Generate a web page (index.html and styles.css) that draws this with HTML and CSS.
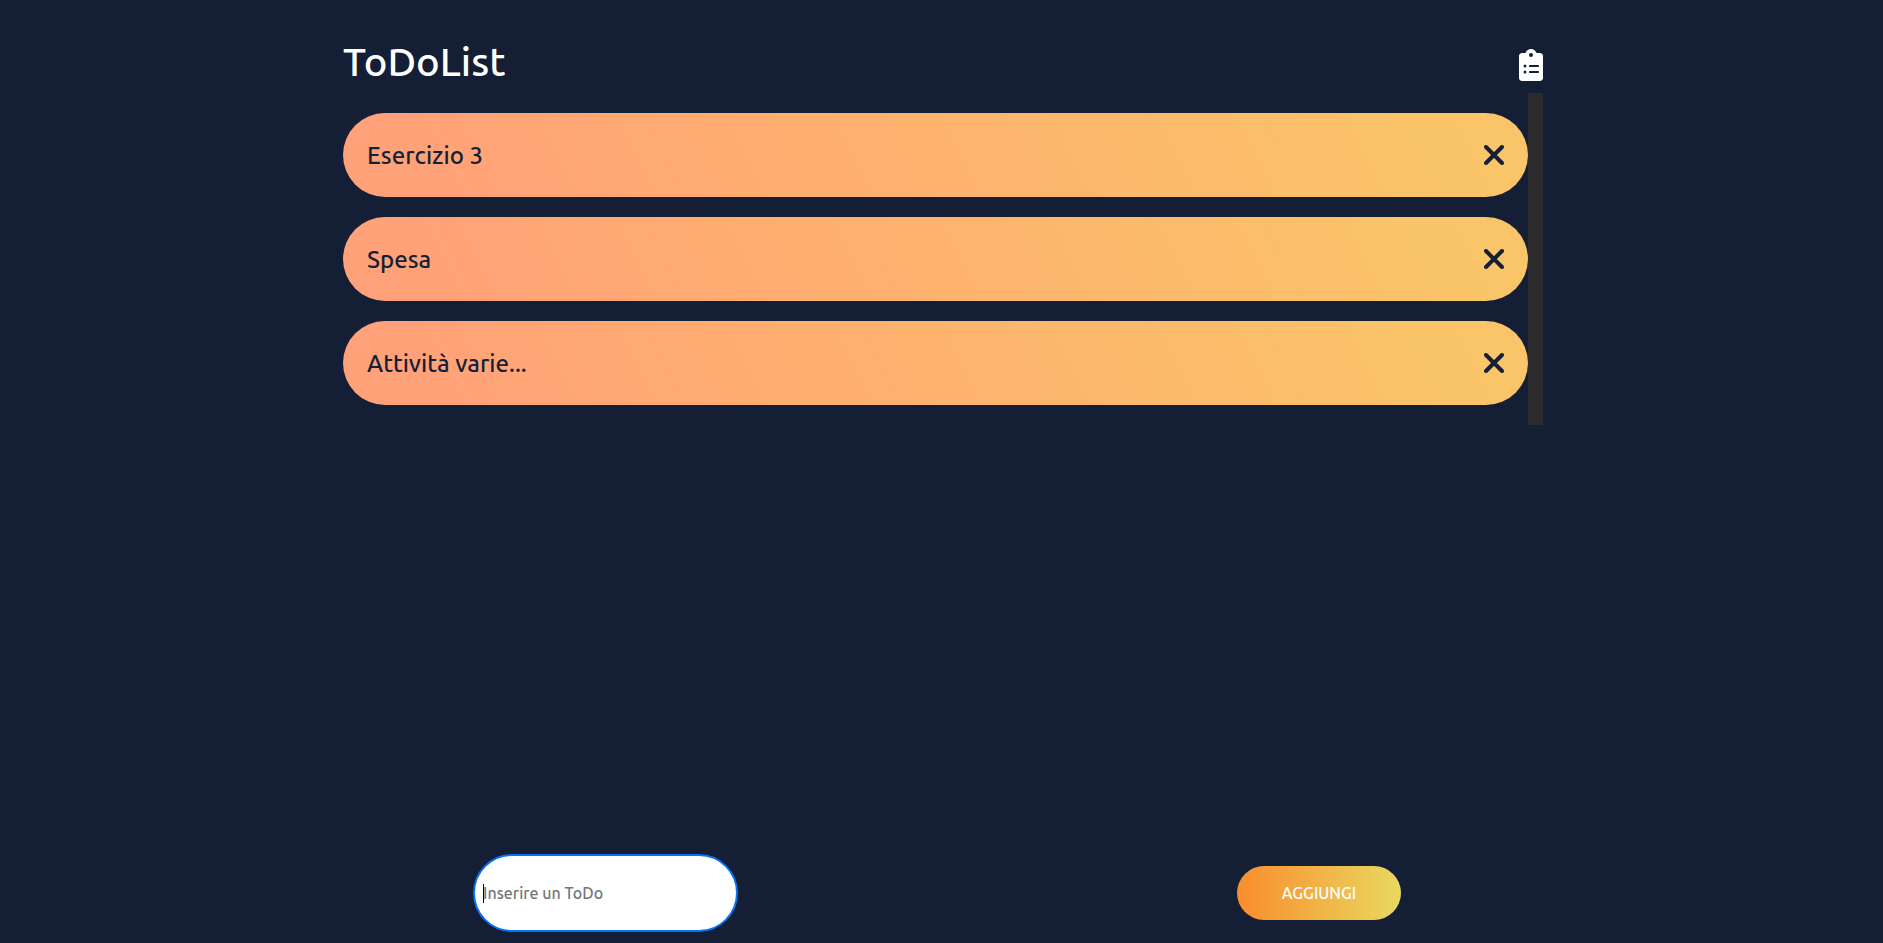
FILE: index.html
```html
<!DOCTYPE html>
<html lang="it">
<head>
<meta charset="utf-8">
<meta name="viewport" content="width=device-width, initial-scale=1">
<title>ToDoList</title>
<link rel="stylesheet" href="styles.css">
</head>
<body>
<div class="page">
  <header class="header">
    <h1 class="title">ToDoList</h1>
    <svg class="logo" viewBox="0 0 384 512" aria-hidden="true"><path fill="currentColor" fill-rule="evenodd" d="M336 64h-53.88C268.9 26.8 233.7 0 192 0S115.1 26.8 101.900 64H48C21.5 64 0 85.480 0 112v352C0 490.500 21.500 512 48 512h288c26.500 0 48-21.480 48-48V112C384 85.480 362.500 64 336 64zM192 64a32 32 0 1 1 0 64 32 32 0 1 1 0-64zM72 272a24 24 0 1 1 48 0 24 24 0 1 1-48 0zM176 256H304c8.800 0 16 7.200 16 16s-7.200 16-16 16H176c-8.800 0-16-7.200-16-16s7.200-16 16-16zM72 368a24 24 0 1 1 48 0 24 24 0 1 1-48 0zM160 368c0-8.800 7.200-16 16-16H304c8.800 0 16 7.200 16 16s-7.200 16-16 16H176c-8.800 0-16-7.200-16-16z"/></svg>
  </header>
  <main class="board">
    <ul class="list">
      <li class="item"><span class="label">Esercizio 3</span><button class="remove" type="button" aria-label="Rimuovi Esercizio 3"><svg class="cross" viewBox="0 0 20 20"><path d="M2 2 18 18M18 2 2 18"/></svg></button></li>
      <li class="item"><span class="label">Spesa</span><button class="remove" type="button" aria-label="Rimuovi Spesa"><svg class="cross" viewBox="0 0 20 20"><path d="M2 2 18 18M18 2 2 18"/></svg></button></li>
      <li class="item"><span class="label">Attività varie...</span><button class="remove" type="button" aria-label="Rimuovi Attività varie..."><svg class="cross" viewBox="0 0 20 20"><path d="M2 2 18 18M18 2 2 18"/></svg></button></li>
    </ul>
    <div class="track"></div>
  </main>
  <form class="form">
    <div class="entry">
      <input class="field" type="text" placeholder="Inserire un ToDo" aria-label="Inserire un ToDo" autofocus>
      <span class="caret"></span>
    </div>
    <button class="add" type="button">AGGIUNGI</button>
  </form>
</div>
</body>
</html>
```

FILE: styles.css
```css
* {
  box-sizing: border-box;
}

body {
  margin: 0;
  background: #141e34;
  color: #fff;
  font-family: Ubuntu, "Noto Sans", sans-serif;
  font-weight: 500;
}

.page {
  display: flex;
  flex-direction: column;
  width: 100%;
  max-width: 1203px;
  min-height: 100vh;
  margin: 0 auto;
  padding: 33px 0 11px 3px;
}

.header {
  display: flex;
  align-items: flex-start;
  justify-content: space-between;
  height: 60px;
}

.title {
  margin: 0;
  font-size: 40px;
  font-weight: 500;
  line-height: 58px;
}

.logo {
  width: 24px;
  height: 32px;
  margin-top: 16px;
}

.board {
  display: flex;
}

.list {
  display: flex;
  flex: 1;
  flex-direction: column;
  gap: 20px;
  margin: 0;
  padding: 20px 0;
  list-style: none;
}

.item {
  display: flex;
  align-items: center;
  justify-content: space-between;
  min-height: 84px;
  padding: 0 24px;
  border-radius: 42px;
  background: linear-gradient(64deg, #ffa179 6%, #ffae70 38%, #f9c568 94%);
  color: #151f36;
  font-size: 24px;
  line-height: 34px;
}

.label {
  padding-top: 2px;
}

.remove {
  display: flex;
  padding: 0;
  border: 0;
  background: none;
  color: inherit;
}

.cross {
  width: 20px;
  height: 20px;
  fill: none;
  stroke: currentColor;
  stroke-width: 4;
  stroke-linecap: round;
}

.track {
  width: 15px;
  background: #2b2b2b;
}

.form {
  display: flex;
  align-items: center;
  justify-content: space-between;
  margin-top: auto;
  padding: 0 142px 0 130px;
}

.entry {
  display: flex;
  position: relative;
}

.field {
  width: 265px;
  height: 78px;
  padding: 0 8px;
  border: 2px solid #0a73f5;
  border-radius: 39px;
  outline: none;
  background: #fff;
  color: #000;
  caret-color: transparent;
  font: inherit;
  font-size: 16px;
}

.field::placeholder {
  color: #757575;
}

.caret {
  position: absolute;
  top: 30px;
  left: 10px;
  width: 1px;
  height: 19px;
  background: #000;
}

.add {
  width: 164px;
  height: 54px;
  border: 0;
  border-radius: 27px;
  background: linear-gradient(90deg, #f98d2d, #ead860);
  color: #fff;
  font: inherit;
  font-size: 16px;
  font-weight: 500;
}
```
